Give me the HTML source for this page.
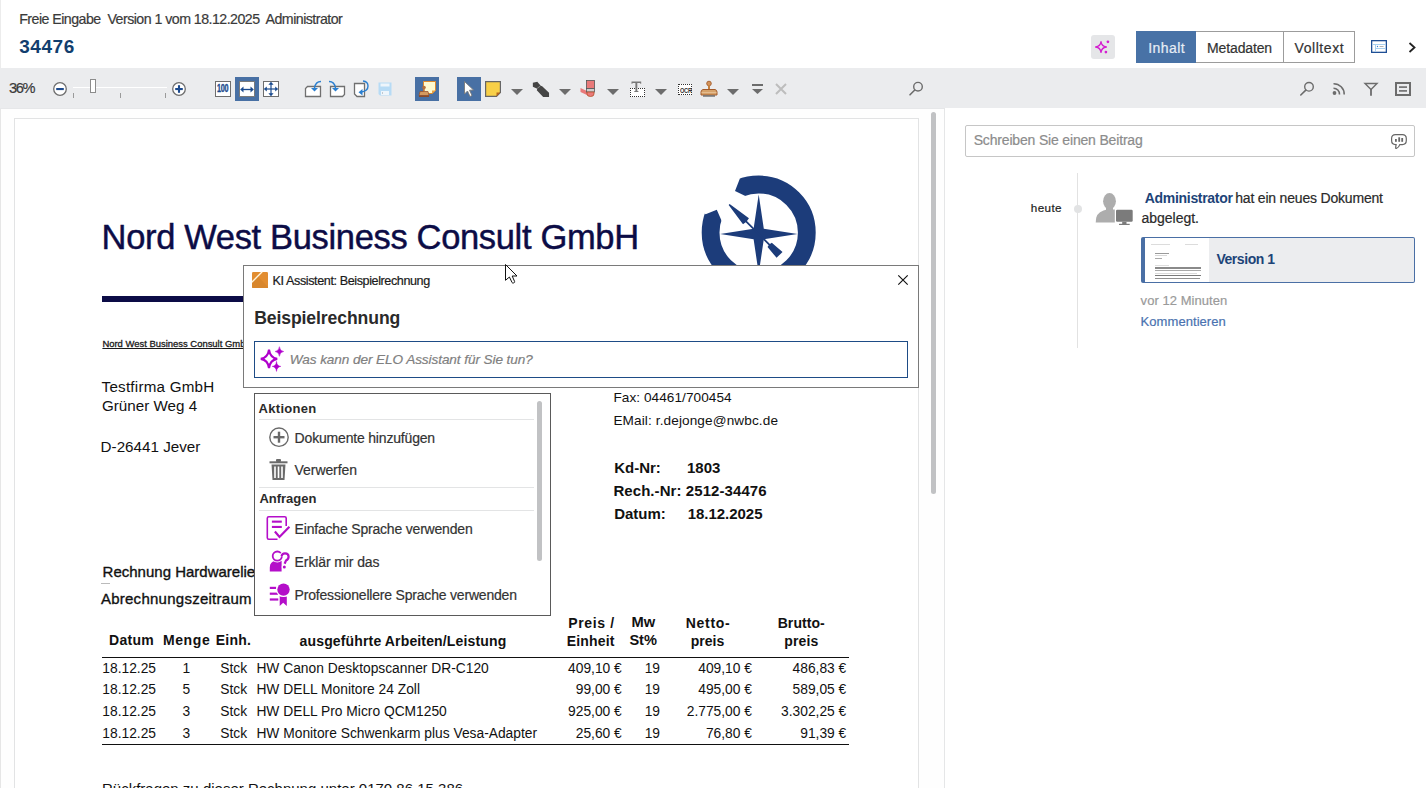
<!DOCTYPE html>
<html><head><meta charset="utf-8">
<style>
*{margin:0;padding:0;box-sizing:border-box}
html,body{width:1426px;height:788px;overflow:hidden;background:#fff;font-family:"Liberation Sans",sans-serif}
body{position:relative}
.a{position:absolute}
.t{position:absolute;white-space:pre;line-height:1}
svg{position:absolute;overflow:visible}
</style></head><body>
<!-- header -->
<div class="a" style="left:0;top:0;width:1426px;height:68px;background:#fff"></div>
<div class="a" style="left:1091px;top:35px;width:24px;height:24px;background:#e5e6e8;border-radius:3px"></div>
<svg style="left:1091px;top:35px" width="24" height="24" viewBox="0 0 24 24">
  <path d="M10 6.6 Q10.6 11.4 15.4 12 Q10.6 12.6 10 17.4 Q9.4 12.6 4.6 12 Q9.4 11.4 10 6.6Z" fill="none" stroke="#d420d0" stroke-width="1.3" stroke-linejoin="round"/>
  <circle cx="16.9" cy="6.8" r="1.35" fill="#d420d0"/>
  <circle cx="14.9" cy="17.1" r="1.35" fill="#d420d0"/>
</svg>
<div class="a" style="left:1136px;top:31px;width:219px;height:32px;border:1px solid #9c9c9c;background:#fff"></div>
<div class="a" style="left:1136px;top:31px;width:60px;height:32px;background:#4872a6"></div>
<div class="a" style="left:1283px;top:31px;width:1px;height:32px;background:#9c9c9c"></div>
<svg style="left:1371px;top:40px" width="16" height="13" viewBox="0 0 16 13">
  <rect x="0.65" y="0.65" width="14.7" height="11.7" fill="#fff" stroke="#1f4f95" stroke-width="1.3"/>
  <line x1="1.3" y1="4.5" x2="14.7" y2="4.5" stroke="#a8d0f0" stroke-width="1"/>
  <line x1="4.5" y1="4.5" x2="4.5" y2="12" stroke="#a8d0f0" stroke-width="1"/>
  <line x1="4.5" y1="8.5" x2="14.7" y2="8.5" stroke="#a8d0f0" stroke-width="1"/>
  <circle cx="6.5" cy="6.5" r="0.7" fill="#3a7fd0"/>
  <line x1="8.5" y1="6.5" x2="12.5" y2="6.5" stroke="#aaa" stroke-width="0.9"/>
</svg>
<svg style="left:1408px;top:42px" width="9" height="11" viewBox="0 0 9 11">
  <path d="M1.5 1 L6.5 5.5 L1.5 10" fill="none" stroke="#222" stroke-width="1.8"/>
</svg>
<div class=t style="left:19.20px;top:12.38px;font-size:14.2px;font-weight:400;font-style:normal;color:#3a3a3a;letter-spacing:-0.531px;-webkit-text-stroke:0.2px #3a3a3a;">Freie Eingabe  Version 1 vom 18.12.2025  Administrator</div>
<div class=t style="left:19.20px;top:37.12px;font-size:19px;font-weight:700;font-style:normal;color:#123e6e;letter-spacing:0.564px;">34476</div>
<div class=t style="left:1148.20px;top:40.55px;font-size:14px;font-weight:400;font-style:normal;color:#e6edf5;letter-spacing:0.450px;-webkit-text-stroke:0.2px #e6edf5;">Inhalt</div>
<div class=t style="left:1207.10px;top:40.55px;font-size:14px;font-weight:400;font-style:normal;color:#333;letter-spacing:-0.146px;-webkit-text-stroke:0.2px #333;">Metadaten</div>
<div class=t style="left:1294.60px;top:40.55px;font-size:14px;font-weight:400;font-style:normal;color:#333;letter-spacing:0.551px;-webkit-text-stroke:0.2px #333;">Volltext</div>
<!-- toolbar -->
<div class="a" style="left:0;top:68px;width:1426px;height:40px;background:#ebecee"></div>
<div id="tbicons">
<!-- zoom -->
<svg style="left:53px;top:82px" width="14" height="14" viewBox="0 0 14 14">
  <circle cx="7" cy="7" r="6.3" fill="#fff" stroke="#6e6e6e" stroke-width="1.3"/>
  <rect x="3.2" y="6" width="7.6" height="2.1" fill="#1c4a8e"/>
</svg>
<div class="a" style="left:73px;top:87px;width:94px;height:1px;background:#fff"></div>
<div class="a" style="left:73px;top:93px;width:1px;height:5px;background:#9a9a9a"></div>
<div class="a" style="left:120px;top:93px;width:1px;height:5px;background:#9a9a9a"></div>
<div class="a" style="left:165px;top:93px;width:1px;height:5px;background:#9a9a9a"></div>
<div class="a" style="left:90px;top:79px;width:6px;height:14px;background:#fff;border:1px solid #8c8c8c"></div>
<svg style="left:172px;top:82px" width="14" height="14" viewBox="0 0 14 14">
  <circle cx="7" cy="7" r="6.3" fill="#fff" stroke="#6e6e6e" stroke-width="1.3"/>
  <rect x="3.2" y="6" width="7.6" height="2.1" fill="#1c4a8e"/>
  <rect x="5.95" y="3.2" width="2.1" height="7.6" fill="#1c4a8e"/>
</svg>
</div>
<!-- 100 / fit width / fit all -->
<div class="a" style="left:215px;top:81px;width:16px;height:16px;background:#fff;border:1px solid #6e6e6e"></div>
<div class="t" style="left:217.4px;top:84.4px;font-size:10px;font-weight:bold;color:#1a4a8e;letter-spacing:-0.4px;transform:scaleX(0.72);transform-origin:0 0;-webkit-text-stroke:0.35px #1a4a8e">100</div>
<div class="a" style="left:235px;top:77px;width:24px;height:24px;background:#4870a4"></div>
<div class="a" style="left:239px;top:81px;width:16px;height:16px;background:#fff;border:1px solid #7a7a7a"></div>
<svg style="left:239px;top:81px" width="16" height="16" viewBox="0 0 16 16">
  <line x1="3" y1="8.5" x2="13" y2="8.5" stroke="#1a4a8e" stroke-width="1.3"/>
  <path d="M1.2 8.5 L4.5 5.6 L4.5 11.4Z M14.8 8.5 L11.5 5.6 L11.5 11.4Z" fill="#1a4a8e"/>
</svg>
<div class="a" style="left:263px;top:81px;width:16px;height:16px;background:#fff;border:1px solid #6e6e6e"></div>
<svg style="left:263px;top:81px" width="16" height="16" viewBox="0 0 16 16">
  <line x1="2.5" y1="8" x2="13.5" y2="8" stroke="#1a4a8e" stroke-width="1.2"/>
  <line x1="8" y1="2.5" x2="8" y2="13.5" stroke="#1a4a8e" stroke-width="1.2"/>
  <path d="M0.8 8 L3.8 5.4 L3.8 10.6Z M15.2 8 L12.2 5.4 L12.2 10.6Z M8 0.8 L5.4 3.8 L10.6 3.8Z M8 15.2 L5.4 12.2 L10.6 12.2Z" fill="#1a4a8e"/>
</svg>
<!-- rotate left -->
<svg style="left:304px;top:80px" width="20" height="18" viewBox="0 0 20 18">
  <path d="M3.5 6.5 H16.5 V16.5 H1.5 V8.5Z" fill="#fff" stroke="#707070" stroke-width="1.3"/>
  <path d="M17 1.5 Q11.5 1.5 10.5 8" fill="none" stroke="#2a7fd0" stroke-width="1.4"/>
  <path d="M7 8 L14 8 L10.5 11.5Z" fill="#2a7fd0"/>
</svg>
<!-- rotate right -->
<svg style="left:328px;top:80px" width="20" height="18" viewBox="0 0 20 18">
  <path d="M2.5 6.5 H16.5 V14.5 L14.5 16.5 H2.5Z" fill="#fff" stroke="#707070" stroke-width="1.3"/>
  <path d="M1 1.5 Q6.5 1.5 7.5 8" fill="none" stroke="#2a7fd0" stroke-width="1.4"/>
  <path d="M4 8 L11 8 L7.5 11.5Z" fill="#2a7fd0"/>
</svg>
<!-- page with arrow -->
<svg style="left:353px;top:80px" width="20" height="18" viewBox="0 0 20 18">
  <path d="M1.5 3.5 H11.5 V16.5 H4 L1.5 14Z" fill="#fff" stroke="#707070" stroke-width="1.3"/>
  <path d="M10 1 Q15 1.5 15 6 Q15 11 8.5 12" fill="none" stroke="#2a7fd0" stroke-width="1.4"/>
  <path d="M5.5 12.2 L9.5 9 L9.5 15.5Z" fill="#2a7fd0"/>
</svg>
<!-- save disabled -->
<svg style="left:378px;top:82px" width="14" height="14" viewBox="0 0 14 14">
  <path d="M0.5 0.5 H13.5 V13.5 H2 L0.5 12Z" fill="#b7dbf5"/>
  <rect x="2.5" y="1.5" width="9" height="3" fill="#eef5fb"/>
  <rect x="3" y="9" width="8" height="4" fill="#eef5fb"/>
  <rect x="4" y="10" width="1" height="2" fill="#c0c8d0"/>
</svg>
<!-- active note/stamp -->
<div class="a" style="left:415px;top:77px;width:24px;height:24px;background:#4870a4"></div>
<svg style="left:415px;top:77px" width="24" height="24" viewBox="0 0 24 24">
  <path d="M8.5 4.5 H20.5 V13.5 L17 16.5 H8.5Z" fill="#fffad0" stroke="#e08a2a" stroke-width="1"/>
  <path d="M17 16.5 V13.5 H20.5Z" fill="#e8a040"/>
  <circle cx="9" cy="10.5" r="1.8" fill="#b5703a"/>
  <rect x="8.3" y="11" width="1.4" height="3" fill="#b5703a"/>
  <path d="M5 14.5 H13 L14 18.5 H4Z" fill="#d49a60" stroke="#9a5530" stroke-width="0.8"/>
  <rect x="4" y="18.5" width="10" height="1.5" fill="#8a4a28"/>
</svg>
<!-- selector active -->
<div class="a" style="left:457px;top:77px;width:24px;height:24px;background:#4870a4"></div>
<svg style="left:457px;top:77px" width="24" height="24" viewBox="0 0 24 24">
  <path d="M7.5 4.5 L7.5 17 L10.5 14 L13 19.5 L15 18.5 L12.5 13.2 L16.5 13Z" fill="#fff" stroke="#7a7a7a" stroke-width="0.9" stroke-linejoin="round"/>
</svg>
<!-- sticky note -->
<svg style="left:485px;top:81px" width="16" height="16" viewBox="0 0 16 16">
  <path d="M0.6 0.6 H15.4 V11.5 L11.5 15.4 H0.6Z" fill="#f8d048" stroke="#666" stroke-width="1.2"/>
  <path d="M11.5 15.4 V11.5 H15.4Z" fill="#b5651d"/>
</svg>
<svg style="left:511px;top:89px" width="12" height="6" viewBox="0 0 12 6"><path d="M0 0 H12 L6 6Z" fill="#6c6c6c"/></svg>
<!-- marker -->
<svg style="left:532px;top:81px" width="18" height="17" viewBox="0 0 18 17">
  <path d="M0.85 1.83 L5.27 0.85 L8.7 4.78 L10.17 5.27 L17.04 11.65 L17.04 16.06 L11.15 16.06 L4.78 9.19 L5.27 7.72 L0.85 5.76Z" fill="#454545"/>
  <line x1="5.3" y1="7.2" x2="8.2" y2="5.2" stroke="#a0a0a0" stroke-width="0.8"/>
</svg>
<svg style="left:559px;top:89px" width="12" height="6" viewBox="0 0 12 6"><path d="M0 0 H12 L6 6Z" fill="#6c6c6c"/></svg>
<!-- eraser -->
<svg style="left:580px;top:80px" width="16" height="18" viewBox="0 0 16 18">
  <path d="M0.5 8 L8 11.5 L8 15.5 L0.5 12Z" fill="#e97a7a"/>
  <rect x="6.5" y="0.5" width="8" height="8" fill="#e97a7a" stroke="#555" stroke-width="0.8"/>
  <rect x="6.5" y="8.5" width="8" height="3.5" fill="#cfcfcf" stroke="#555" stroke-width="0.8"/>
  <path d="M7 12 H14 V14 Q14 16.5 10.5 16.5 Q7 16.5 7 14Z" fill="#e97a7a" stroke="#b5502a" stroke-width="0.8"/>
</svg>
<svg style="left:607px;top:89px" width="12" height="6" viewBox="0 0 12 6"><path d="M0 0 H12 L6 6Z" fill="#6c6c6c"/></svg>
<!-- text -->
<div class="a" style="left:630px;top:88px;width:15px;height:9px;background:#fff;border:1px dotted #333"></div>
<svg style="left:629px;top:81px" width="17" height="17" viewBox="0 0 17 17">
  <path d="M2.5 0.6 H12.2 V2.8 H11.4 L11 1.9 H8.3 V10 H9.4 V11 H5.3 V10 H6.4 V1.9 H3.7 L3.3 2.8 H2.5Z" fill="#777"/>
</svg>
<svg style="left:655px;top:89px" width="12" height="6" viewBox="0 0 12 6"><path d="M0 0 H12 L6 6Z" fill="#6c6c6c"/></svg>
<!-- OCR -->
<div class="a" style="left:678px;top:84px;width:14px;height:11px;background:#fff;border:1px dotted #333"></div>
<div class="t" style="left:680px;top:86.5px;font-size:7px;font-weight:bold;color:#333;letter-spacing:-0.3px;transform:scaleX(0.8);transform-origin:0 0">OCR</div>
<!-- stamp -->
<svg style="left:700px;top:80px" width="18" height="18" viewBox="0 0 18 18">
  <circle cx="9" cy="3.5" r="2.3" fill="#d4945a" stroke="#a35a2a" stroke-width="0.9"/>
  <rect x="8" y="5" width="2" height="4.5" fill="#c5803f"/>
  <path d="M3 9.5 H15 Q17 10 17 12 V15 H1 V12 Q1 10 3 9.5Z" fill="#d6a26a" stroke="#a35a2a" stroke-width="1"/>
  <rect x="1.5" y="12" width="15" height="0.8" fill="#e9c49a"/>
  <rect x="3" y="15.2" width="12" height="1.5" fill="#6e6e6e"/>
</svg>
<svg style="left:727px;top:89px" width="12" height="6" viewBox="0 0 12 6"><path d="M0 0 H12 L6 6Z" fill="#6c6c6c"/></svg>
<!-- two-lines -->
<div class="a" style="left:752px;top:84px;width:10.5px;height:2px;background:#6c6c6c"></div>
<svg style="left:752px;top:89px" width="11" height="5" viewBox="0 0 11 5"><path d="M0 0 H11 L5.5 5Z" fill="#6c6c6c"/></svg>
<!-- X disabled -->
<svg style="left:775px;top:83px" width="12" height="12" viewBox="0 0 12 12">
  <path d="M1 1 L11 11 M11 1 L1 11" stroke="#bdbdbd" stroke-width="2"/>
</svg>
<!-- search left -->
<svg style="left:908px;top:81px" width="16" height="16" viewBox="0 0 16 16">
  <circle cx="10" cy="5.7" r="4.3" fill="none" stroke="#6c6c6c" stroke-width="1.4"/>
  <line x1="6.8" y1="9" x2="2" y2="13.8" stroke="#6c6c6c" stroke-width="1.6" stroke-linecap="round"/>
</svg>
<!-- right toolbar -->
<svg style="left:1299px;top:81px" width="16" height="16" viewBox="0 0 16 16">
  <circle cx="10" cy="5.8" r="4.3" fill="none" stroke="#6c6c6c" stroke-width="1.4"/>
  <line x1="6.8" y1="9.1" x2="1.8" y2="14" stroke="#6c6c6c" stroke-width="1.6" stroke-linecap="round"/>
</svg>
<svg style="left:1332px;top:82px" width="14" height="14" viewBox="0 0 14 14">
  <circle cx="2.5" cy="11" r="1.9" fill="#6c6c6c"/>
  <path d="M1.5 6.2 A6 6 0 0 1 7.5 12.5" fill="none" stroke="#6c6c6c" stroke-width="1.6"/>
  <path d="M1.5 1.7 A10.5 10.5 0 0 1 12.2 12.5" fill="none" stroke="#6c6c6c" stroke-width="1.6"/>
</svg>
<svg style="left:1364px;top:82px" width="14" height="14" viewBox="0 0 14 14">
  <path d="M1 1.5 H13 L7 7.5Z" fill="none" stroke="#6c6c6c" stroke-width="1.4" stroke-linejoin="miter"/>
  <line x1="7" y1="7" x2="7" y2="13.8" stroke="#6c6c6c" stroke-width="1.8"/>
</svg>
<svg style="left:1394px;top:81px" width="18" height="16" viewBox="0 0 18 16">
  <rect x="2" y="2" width="14" height="12" fill="none" stroke="#6c6c6c" stroke-width="2"/>
  <rect x="5" y="5.3" width="8" height="1.6" fill="#6c6c6c"/>
  <rect x="5" y="9.1" width="8" height="1.6" fill="#6c6c6c"/>
</svg>

<div class=t style="left:9.00px;top:81.04px;font-size:14.6px;font-weight:400;font-style:normal;color:#3a3a3a;letter-spacing:-1.359px;-webkit-text-stroke:0.2px #3a3a3a;">36%</div>
<!-- viewer -->
<div class="a" style="left:0;top:108px;width:944px;height:680px;background:#fefefe"></div>
<div class="a" style="left:0;top:108px;width:1px;height:680px;background:#e6e6e6"></div>
<div class="a" style="left:0;top:0;width:1px;height:68px;background:#ececec"></div>
<div class="a" style="left:0;top:108px;width:944px;height:1px;background:#e6e7e9"></div>
<div class="a" style="left:14px;top:118px;width:905px;height:690px;background:#fff;border:1px solid #e2e3e4"></div>
<div class="a" style="left:931px;top:112px;width:5px;height:382px;background:#c1c2c4;border-radius:3px"></div>
<div class="a" style="left:944px;top:108px;width:1px;height:680px;background:#e5e6e7"></div>
<div class=t style="left:101.60px;top:220.10px;font-size:34.5px;font-weight:400;font-style:normal;color:#0c0c46;letter-spacing:-0.341px;-webkit-text-stroke:0.45px #0c0c46;">Nord West Business Consult GmbH</div>
<div class=t style="left:102.40px;top:338.60px;font-size:9.45px;font-weight:400;font-style:normal;color:#222;text-decoration:underline;-webkit-text-stroke:0.3px #1a1a1a;">Nord West Business Consult GmbH</div>
<div class=t style="left:101.60px;top:378.73px;font-size:15.2px;font-weight:400;font-style:normal;color:#111;letter-spacing:0.223px;">Testfirma GmbH</div>
<div class=t style="left:102.00px;top:397.73px;font-size:15.2px;font-weight:400;font-style:normal;color:#111;">Grüner Weg 4</div>
<div class=t style="left:100.60px;top:438.93px;font-size:15.2px;font-weight:400;font-style:normal;color:#111;letter-spacing:0.015px;">D-26441 Jever</div>
<div class=t style="left:613.40px;top:391.29px;font-size:13.6px;font-weight:400;font-style:normal;color:#111;letter-spacing:0.065px;">Fax: 04461/700454</div>
<div class=t style="left:613.40px;top:414.39px;font-size:13.6px;font-weight:400;font-style:normal;color:#111;letter-spacing:0.116px;">EMail: r.dejonge@nwbc.de</div>
<div class=t style="left:614.20px;top:460.30px;font-size:15px;font-weight:700;font-style:normal;color:#111;">Kd-Nr:</div>
<div class=t style="left:687.00px;top:460.30px;font-size:15px;font-weight:700;font-style:normal;color:#111;">1803</div>
<div class=t style="left:613.40px;top:482.50px;font-size:15px;font-weight:700;font-style:normal;color:#111;letter-spacing:0.075px;">Rech.-Nr: 2512-34476</div>
<div class=t style="left:614.20px;top:505.60px;font-size:15px;font-weight:700;font-style:normal;color:#111;">Datum:</div>
<div class=t style="left:687.70px;top:505.60px;font-size:15px;font-weight:700;font-style:normal;color:#111;letter-spacing:-0.031px;">18.12.2025</div>
<div class=t style="left:102.60px;top:563.70px;font-size:15px;font-weight:400;font-style:normal;color:#111;-webkit-text-stroke:0.35px #111;">Rechnung Hardwarelieferung</div>
<div class=t style="left:100.90px;top:590.60px;font-size:15px;font-weight:400;font-style:normal;color:#111;letter-spacing:0.260px;-webkit-text-stroke:0.35px #111;">Abrechnungszeitraum</div>
<div class=t style="left:109.00px;top:633.15px;font-size:14px;font-weight:700;font-style:normal;color:#111;letter-spacing:0.309px;">Datum</div>
<div class=t style="left:162.90px;top:633.15px;font-size:14px;font-weight:700;font-style:normal;color:#111;letter-spacing:0.639px;">Menge</div>
<div class=t style="left:215.70px;top:633.15px;font-size:14px;font-weight:700;font-style:normal;color:#111;letter-spacing:0.266px;">Einh.</div>
<div class=t style="left:299.60px;top:633.75px;font-size:14px;font-weight:700;font-style:normal;color:#111;letter-spacing:0.146px;">ausgeführte Arbeiten/Leistung</div>
<div class=t style="left:568.30px;top:615.95px;font-size:14px;font-weight:700;font-style:normal;color:#111;letter-spacing:0.628px;">Preis /</div>
<div class=t style="left:566.80px;top:633.75px;font-size:14px;font-weight:700;font-style:normal;color:#111;letter-spacing:0.171px;">Einheit</div>
<div class=t style="left:631.60px;top:615.36px;font-size:14.7px;font-weight:700;font-style:normal;color:#111;">Mw</div>
<div class=t style="left:629.40px;top:633.24px;font-size:14.6px;font-weight:700;font-style:normal;color:#111;">St%</div>
<div class=t style="left:685.70px;top:615.95px;font-size:14px;font-weight:700;font-style:normal;color:#111;letter-spacing:0.713px;">Netto-</div>
<div class=t style="left:690.70px;top:633.75px;font-size:14px;font-weight:700;font-style:normal;color:#111;letter-spacing:0.033px;">preis</div>
<div class=t style="left:777.70px;top:615.95px;font-size:14px;font-weight:700;font-style:normal;color:#111;letter-spacing:0.074px;">Brutto-</div>
<div class=t style="left:784.20px;top:633.75px;font-size:14px;font-weight:700;font-style:normal;color:#111;letter-spacing:0.183px;">preis</div>
<div class=t style="left:102.30px;top:661.82px;font-size:13.8px;font-weight:400;font-style:normal;color:#111;">18.12.25</div>
<div class=t style="left:182.40px;top:661.82px;font-size:13.8px;font-weight:400;font-style:normal;color:#111;">1</div>
<div class=t style="left:220.30px;top:661.82px;font-size:13.8px;font-weight:400;font-style:normal;color:#111;">Stck</div>
<div class=t style="left:256.40px;top:661.82px;font-size:13.8px;font-weight:400;font-style:normal;color:#111;">HW Canon Desktopscanner DR-C120</div>
<div class=t style="left:568.08px;top:661.82px;font-size:13.8px;font-weight:400;font-style:normal;color:#111;">409,10 €</div>
<div class=t style="left:644.64px;top:661.82px;font-size:13.8px;font-weight:400;font-style:normal;color:#111;">19</div>
<div class=t style="left:698.28px;top:661.82px;font-size:13.8px;font-weight:400;font-style:normal;color:#111;">409,10 €</div>
<div class=t style="left:792.58px;top:661.82px;font-size:13.8px;font-weight:400;font-style:normal;color:#111;">486,83 €</div>
<div class=t style="left:102.30px;top:683.22px;font-size:13.8px;font-weight:400;font-style:normal;color:#111;">18.12.25</div>
<div class=t style="left:182.40px;top:683.22px;font-size:13.8px;font-weight:400;font-style:normal;color:#111;">5</div>
<div class=t style="left:220.30px;top:683.22px;font-size:13.8px;font-weight:400;font-style:normal;color:#111;">Stck</div>
<div class=t style="left:256.40px;top:683.22px;font-size:13.8px;font-weight:400;font-style:normal;color:#111;">HW DELL Monitore 24 Zoll</div>
<div class=t style="left:575.75px;top:683.22px;font-size:13.8px;font-weight:400;font-style:normal;color:#111;">99,00 €</div>
<div class=t style="left:644.64px;top:683.22px;font-size:13.8px;font-weight:400;font-style:normal;color:#111;">19</div>
<div class=t style="left:698.28px;top:683.22px;font-size:13.8px;font-weight:400;font-style:normal;color:#111;">495,00 €</div>
<div class=t style="left:792.58px;top:683.22px;font-size:13.8px;font-weight:400;font-style:normal;color:#111;">589,05 €</div>
<div class=t style="left:102.30px;top:704.92px;font-size:13.8px;font-weight:400;font-style:normal;color:#111;">18.12.25</div>
<div class=t style="left:182.40px;top:704.92px;font-size:13.8px;font-weight:400;font-style:normal;color:#111;">3</div>
<div class=t style="left:220.30px;top:704.92px;font-size:13.8px;font-weight:400;font-style:normal;color:#111;">Stck</div>
<div class=t style="left:256.40px;top:704.92px;font-size:13.8px;font-weight:400;font-style:normal;color:#111;">HW DELL Pro Micro QCM1250</div>
<div class=t style="left:568.08px;top:704.92px;font-size:13.8px;font-weight:400;font-style:normal;color:#111;">925,00 €</div>
<div class=t style="left:644.64px;top:704.92px;font-size:13.8px;font-weight:400;font-style:normal;color:#111;">19</div>
<div class=t style="left:686.78px;top:704.92px;font-size:13.8px;font-weight:400;font-style:normal;color:#111;">2.775,00 €</div>
<div class=t style="left:781.08px;top:704.92px;font-size:13.8px;font-weight:400;font-style:normal;color:#111;">3.302,25 €</div>
<div class=t style="left:102.30px;top:726.72px;font-size:13.8px;font-weight:400;font-style:normal;color:#111;">18.12.25</div>
<div class=t style="left:182.40px;top:726.72px;font-size:13.8px;font-weight:400;font-style:normal;color:#111;">3</div>
<div class=t style="left:220.30px;top:726.72px;font-size:13.8px;font-weight:400;font-style:normal;color:#111;">Stck</div>
<div class=t style="left:256.40px;top:726.72px;font-size:13.8px;font-weight:400;font-style:normal;color:#111;">HW Monitore Schwenkarm plus Vesa-Adapter</div>
<div class=t style="left:575.75px;top:726.72px;font-size:13.8px;font-weight:400;font-style:normal;color:#111;">25,60 €</div>
<div class=t style="left:644.64px;top:726.72px;font-size:13.8px;font-weight:400;font-style:normal;color:#111;">19</div>
<div class=t style="left:705.95px;top:726.72px;font-size:13.8px;font-weight:400;font-style:normal;color:#111;">76,80 €</div>
<div class=t style="left:800.25px;top:726.72px;font-size:13.8px;font-weight:400;font-style:normal;color:#111;">91,39 €</div>
<div class=t style="left:102.00px;top:780.80px;font-size:15px;font-weight:400;font-style:normal;color:#111;">Rückfragen zu dieser Rechnung unter 0170 86 15 386</div>
<!-- doc graphics -->
<div class="a" style="left:102px;top:296px;width:480px;height:6px;background:#0c0c46"></div>
<div class="a" style="left:101px;top:583px;width:9px;height:1px;background:#bbb"></div>
<div class="a" style="left:102px;top:657px;width:747px;height:1.3px;background:#111"></div>
<div class="a" style="left:102px;top:743.5px;width:747px;height:1.6px;background:#111"></div>
<svg style="left:700px;top:174px" width="118" height="118" viewBox="0 0 118 118">
  <circle cx="58.7" cy="58.6" r="48.1" fill="none" stroke="#1c3c7a" stroke-width="17.8"/>
  <path d="M21.7 47 L16.8 35.8 L5.6 40.2 L-20 16 L30 -14 L39.8 4.7 L35 17.1 L45.4 22.1 L40 45Z" fill="#fff"/>
  <path d="M58.7 20.5 L63.8 54.8 L97.5 60 L63.8 65.2 L58.7 99.5 L53.6 65.2 L20.2 60 L53.6 54.8 Z" fill="#1c3c7a"/>
  <g transform="translate(58.7 60) rotate(45)">
    <path d="M-41.8 -0.7 L-18 -4.2 L-17.5 -0.9 L15 -0.9 L15.5 -3 L29.5 -4.2 L29.5 4.2 L15.5 3 L15 0.9 L-17.5 0.9 L-18 4.2 L-41.8 0.7Z" fill="#1c3c7a"/>
  </g>
</svg>

<!-- dialog -->
<div class="a" style="left:243px;top:265px;width:676px;height:123px;background:#fff;border:1px solid #7a7a7a"></div>
<svg style="left:252px;top:272px" width="16" height="16" viewBox="0 0 16 16">
  <rect x="0" y="0" width="16" height="16" rx="1.2" fill="#e28d30"/>
  <path d="M0 10 L6 4.5 L16 15 L16 16 L1 16 Q0 16 0 15Z" fill="#d8862c"/>
  <line x1="-0.2" y1="10.2" x2="10.2" y2="-0.2" stroke="#fff6de" stroke-width="1.3"/>
</svg>
<svg style="left:898px;top:275px" width="10" height="10" viewBox="0 0 10 10">
  <path d="M0.3 0.3 L9.7 9.7 M9.7 0.3 L0.3 9.7" stroke="#111" stroke-width="1.15"/>
</svg>
<div class="a" style="left:254px;top:341px;width:654px;height:37px;background:#fff;border:1.5px solid #1e4c86"></div>
<svg style="left:258px;top:345px" width="28" height="28" viewBox="0 0 28 28">
  <g transform="translate(11 13.9)">
    <path d="M0 -9.2 Q1.1 -1.1 8.2 0 Q1.1 1.1 0 9.2 Q-1.1 1.1 -8.2 0 Q-1.1 -1.1 0 -9.2Z" fill="none" stroke="#b000cc" stroke-width="2.1" stroke-linejoin="bevel"/>
  </g>
  <g transform="translate(21.4 6.5)">
    <path d="M0 -4.8 Q0.45 -0.45 4.3 0 Q0.45 0.45 0 4.8 Q-0.45 0.45 -4.3 0 Q-0.45 -0.45 0 -4.8Z" fill="#b000cc" stroke="#b000cc" stroke-width="0.5"/>
  </g>
  <g transform="translate(18.5 21.4)">
    <path d="M0 -5 Q0.45 -0.45 4.3 0 Q0.45 0.45 0 5 Q-0.45 0.45 -4.3 0 Q-0.45 -0.45 0 -5Z" fill="#b000cc" stroke="#b000cc" stroke-width="0.5"/>
  </g>
</svg>

<div class=t style="left:272.60px;top:274.73px;font-size:12.6px;font-weight:400;font-style:normal;color:#1a1a1a;letter-spacing:-0.408px;-webkit-text-stroke:0.2px #1a1a1a;">KI Assistent: Beispielrechnung</div>
<div class=t style="left:254.20px;top:309.70px;font-size:17.6px;font-weight:700;font-style:normal;color:#2a2a2a;letter-spacing:-0.102px;">Beispielrechnung</div>
<div class=t style="left:289.80px;top:352.99px;font-size:13.6px;font-weight:400;font-style:italic;color:#808080;letter-spacing:-0.088px;-webkit-text-stroke:0.2px #808080;">Was kann der ELO Assistant für Sie tun?</div>
<div class="a" style="left:254px;top:393px;width:297px;height:223px;background:#fff;border:1px solid #5a5a5a"></div>
<div class="a" style="left:537px;top:401px;width:5px;height:160px;background:#c1c2c4;border-radius:3px"></div>
<div class="a" style="left:259px;top:418.5px;width:275px;height:1px;background:#e3e4e5"></div>
<div class="a" style="left:259px;top:486.5px;width:275px;height:1px;background:#e3e4e5"></div>
<div class="a" style="left:259px;top:510px;width:275px;height:1px;background:#e3e4e5"></div>
<svg style="left:269px;top:427px" width="20" height="21" viewBox="0 0 20 21">
  <circle cx="10" cy="10.2" r="9.2" fill="none" stroke="#6a6a6a" stroke-width="1.4"/>
  <rect x="4.5" y="9" width="11" height="2.4" fill="#6a6a6a"/>
  <rect x="8.8" y="4.7" width="2.4" height="11" fill="#6a6a6a"/>
</svg>
<svg style="left:269px;top:459px" width="20" height="22" viewBox="0 0 20 22">
  <rect x="0.5" y="2.3" width="18" height="2" fill="#6a6a6a"/>
  <rect x="7" y="0" width="5" height="3" rx="1" fill="#6a6a6a"/>
  <path d="M2.5 5.5 H16.5 L15.5 21 H3.5 Z" fill="#6a6a6a"/>
  <rect x="5.2" y="7.5" width="1.6" height="11.5" fill="#fff"/>
  <rect x="8.7" y="7.5" width="1.6" height="11.5" fill="#fff"/>
  <rect x="12.2" y="7.5" width="1.6" height="11.5" fill="#fff"/>
</svg>
<svg style="left:266px;top:516px" width="24" height="24" viewBox="0 0 24 24">
  <path d="M20.2 10 V2.3 Q20.2 0.8 18.7 0.8 H2.8 Q1.3 0.8 1.3 2.3 V21.7 Q1.3 23.2 2.8 23.2 H11.5" fill="none" stroke="#b40ec9" stroke-width="1.6"/>
  <rect x="5.9" y="4.6" width="9.9" height="2.1" fill="#b40ec9"/>
  <rect x="5.9" y="9.9" width="9.9" height="2.1" fill="#b40ec9"/>
  <path d="M8.9 15.5 L13.5 20.9 L23.4 10.7" fill="none" stroke="#fff" stroke-width="4"/>
  <path d="M8.9 15.5 L13.5 20.9 L23.4 10.7" fill="none" stroke="#b40ec9" stroke-width="2.2"/>
</svg>
<svg style="left:269px;top:550px" width="21" height="23" viewBox="0 0 21 23">
  <path d="M0.8 21.4 V17.5 Q0.8 11.5 6.5 11 L12.6 10.8 V21.4Z" fill="#b40ec9"/>
  <circle cx="8.3" cy="6.1" r="4.6" fill="none" stroke="#fff" stroke-width="3.4"/>
  <circle cx="8.3" cy="6.1" r="4.6" fill="none" stroke="#b40ec9" stroke-width="1.8"/>
  <path d="M12.6 6.2 Q13 3.3 16 3.3 Q19.6 3.3 19.6 6.8 Q19.6 9.3 17 10.6 L15.6 13.8" fill="none" stroke="#fff" stroke-width="4"/>
  <circle cx="15.3" cy="16.9" r="2.6" fill="#fff"/>
  <path d="M12.6 6.2 Q13 3.3 16 3.3 Q19.6 3.3 19.6 6.8 Q19.6 9.3 17 10.6 L15.6 13.8" fill="none" stroke="#b40ec9" stroke-width="2.2"/>
  <circle cx="15.3" cy="16.9" r="1.5" fill="#b40ec9"/>
</svg>
<svg style="left:269px;top:583px" width="21" height="24" viewBox="0 0 21 24">
  <rect x="0.8" y="3.8" width="6.5" height="2.2" fill="#b40ec9"/>
  <rect x="0.8" y="9.6" width="8.5" height="2.2" fill="#b40ec9"/>
  <rect x="0.8" y="15.4" width="8.5" height="2.2" fill="#b40ec9"/>
  <path d="M10.7 12 V23 L14.2 19.8 L17.8 23 V12Z" fill="#b40ec9"/>
  <circle cx="14.5" cy="6.6" r="7.5" fill="#fff"/>
  <circle cx="14.5" cy="6.6" r="6.2" fill="#b40ec9"/>
</svg>

<div class=t style="left:258.60px;top:401.80px;font-size:13px;font-weight:700;font-style:normal;color:#2a2a2a;letter-spacing:0.282px;">Aktionen</div>
<div class=t style="left:294.60px;top:430.65px;font-size:14px;font-weight:400;font-style:normal;color:#333;letter-spacing:-0.181px;-webkit-text-stroke:0.2px #333;">Dokumente hinzufügen</div>
<div class=t style="left:294.60px;top:463.35px;font-size:14px;font-weight:400;font-style:normal;color:#333;letter-spacing:-0.076px;-webkit-text-stroke:0.2px #333;">Verwerfen</div>
<div class=t style="left:259.40px;top:492.40px;font-size:13px;font-weight:700;font-style:normal;color:#2a2a2a;">Anfragen</div>
<div class=t style="left:294.60px;top:521.55px;font-size:14px;font-weight:400;font-style:normal;color:#333;letter-spacing:-0.192px;-webkit-text-stroke:0.2px #333;">Einfache Sprache verwenden</div>
<div class=t style="left:294.60px;top:554.65px;font-size:14px;font-weight:400;font-style:normal;color:#333;letter-spacing:-0.109px;-webkit-text-stroke:0.2px #333;">Erklär mir das</div>
<div class=t style="left:294.60px;top:587.55px;font-size:14px;font-weight:400;font-style:normal;color:#333;letter-spacing:-0.194px;-webkit-text-stroke:0.2px #333;">Professionellere Sprache verwenden</div>
<svg style="left:504px;top:263px" width="16" height="22" viewBox="0 0 16 22">
  <path d="M1.5 1.5 V17.3 L5.4 14 L8.1 19.6 Q8.6 20.3 9.4 20 L10.3 19.6 Q10.9 19.2 10.6 18.5 L8.2 13 H13 Z" fill="#fff" stroke="#111" stroke-width="1" stroke-linejoin="round"/>
</svg>
<!-- side -->
<div class="a" style="left:965px;top:125px;width:450px;height:32px;background:#fff;border:1px solid #c6c6c6;border-radius:2px"></div>
<svg style="left:1390px;top:133px" width="18" height="17" viewBox="0 0 18 17">
  <path d="M5.5 1.6 H12.3 Q16.3 1.6 16.3 5.6 V7.6 Q16.3 11.6 12.3 11.6 H9.8 Q8.8 14.6 6.4 15.3 Q5.1 15.6 5.7 14.2 L6.1 11.6 H5.5 Q1.6 11.6 1.6 7.6 V5.6 Q1.6 1.6 5.5 1.6Z" fill="#fff" stroke="#666" stroke-width="1.2"/>
  <rect x="5" y="6" width="1.8" height="2.8" fill="#666"/>
  <rect x="8.3" y="4.3" width="1.8" height="4.5" fill="#666"/>
  <rect x="11.3" y="5" width="1.8" height="3.8" fill="#666"/>
</svg>
<div class="a" style="left:1077px;top:173px;width:1px;height:175px;background:#e2e2e2"></div>
<div class="a" style="left:1073.5px;top:204.5px;width:8px;height:8px;border-radius:50%;background:#e2e3e4"></div>
<svg style="left:1095px;top:192px" width="40" height="35" viewBox="0 0 40 35">
  <ellipse cx="14.5" cy="9.2" rx="6.4" ry="8.2" fill="#adadad"/>
  <rect x="11" y="14" width="7" height="5" fill="#adadad"/>
  <path d="M0.7 30.4 Q0.5 21 8.5 18.5 L12 17.5 L19.8 17.5 V30.6 Z" fill="#adadad"/>
  <rect x="21" y="17.8" width="16.7" height="12" rx="1.2" fill="#7b7b7b"/>
  <rect x="27.2" y="29.8" width="4.3" height="2.4" fill="#7b7b7b"/>
  <rect x="24" y="31.8" width="10.7" height="1.2" fill="#7b7b7b"/>
</svg>
<div class="a" style="left:1141px;top:237px;width:274px;height:46px;background:#ecedef;border:1px solid #4a6fa5;border-left:4px solid #4a6fa5;border-radius:2px"></div>
<div class="a" style="left:1145px;top:238px;width:64px;height:44px;background:#fff"></div>
<div class="a" style="left:1151px;top:244px;width:19px;height:1px;background:#dcdcdc"></div>
<div class="a" style="left:1185px;top:244px;width:13px;height:1px;background:#dcdcdc"></div>
<div class="a" style="left:1155px;top:253px;width:14px;height:1px;background:#9a9a9a"></div>
<div class="a" style="left:1155px;top:255px;width:12px;height:1px;background:#d8d8d8"></div>
<div class="a" style="left:1155px;top:258px;width:7px;height:1px;background:#aaa"></div>
<div class="a" style="left:1155px;top:265px;width:14px;height:1px;background:#dedede"></div>
<div class="a" style="left:1155px;top:267px;width:46px;height:1.5px;background:#8a8a8a"></div>
<div class="a" style="left:1155px;top:270px;width:46px;height:1.2px;background:#a8a8a8"></div>
<div class="a" style="left:1155px;top:272.5px;width:42px;height:1px;background:#dadada"></div>
<div class="a" style="left:1155px;top:274.5px;width:46px;height:1.5px;background:#7a7a7a"></div>
<div class="a" style="left:1155px;top:277.5px;width:45px;height:1.3px;background:#909090"></div>

<div class=t style="left:973.70px;top:133.15px;font-size:14px;font-weight:400;font-style:normal;color:#8c8c8c;letter-spacing:-0.172px;-webkit-text-stroke:0.2px #8c8c8c;">Schreiben Sie einen Beitrag</div>
<div class=t style="left:1030.80px;top:201.90px;font-size:11.7px;font-weight:400;font-style:normal;color:#222;letter-spacing:0.388px;-webkit-text-stroke:0.2px #222;">heute</div>
<div class=t style="left:1144.80px;top:190.95px;font-size:14px;font-weight:700;font-style:normal;color:#1d4478;letter-spacing:-0.308px;">Administrator</div>
<div class=t style="left:1235.20px;top:190.95px;font-size:14px;font-weight:400;font-style:normal;color:#2a2a2a;letter-spacing:-0.189px;-webkit-text-stroke:0.2px #2a2a2a;">hat ein neues Dokument</div>
<div class=t style="left:1141.40px;top:210.65px;font-size:14px;font-weight:400;font-style:normal;color:#2a2a2a;-webkit-text-stroke:0.2px #2a2a2a;">abgelegt.</div>
<div class=t style="left:1216.40px;top:252.25px;font-size:14px;font-weight:700;font-style:normal;color:#1d4478;letter-spacing:-0.446px;">Version 1</div>
<div class=t style="left:1140.60px;top:293.50px;font-size:13px;font-weight:400;font-style:normal;color:#9a9a9a;letter-spacing:0.054px;-webkit-text-stroke:0.2px #9a9a9a;">vor 12 Minuten</div>
<div class=t style="left:1140.60px;top:315.30px;font-size:13px;font-weight:400;font-style:normal;color:#4a72b0;letter-spacing:0.059px;-webkit-text-stroke:0.2px #4a72b0;">Kommentieren</div>
</body></html>
